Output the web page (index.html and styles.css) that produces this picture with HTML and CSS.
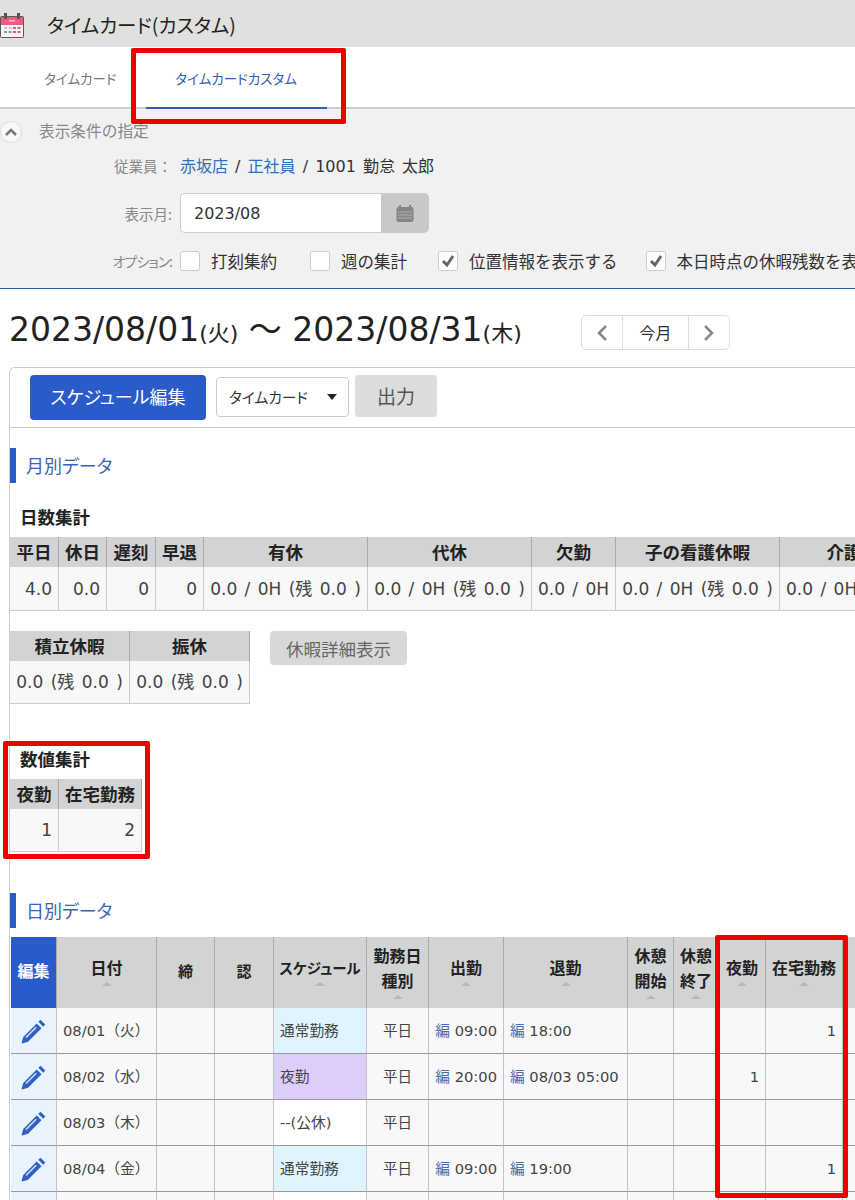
FILE: index.html
```html
<!DOCTYPE html>
<html lang="ja">
<head>
    <meta charset="UTF-8">
    <meta name="viewport" content="width=device-width, initial-scale=1.0">
    <title>タイムカード(カスタム)</title>
    <link rel="stylesheet" href="styles.css">
</head>
<body>
<div class="page">
    <header class="titlebar">
        <svg class="app-icon" width="24" height="25" viewBox="0 0 24 25">
            <rect x="0" y="3" width="24" height="22" rx="2" fill="#5a5a5a"/>
            <rect x="1" y="4" width="22" height="20" fill="#f4f4f4"/>
            <rect x="1" y="4" width="22" height="8" fill="#ef5c80"/>
            <rect x="4" y="0" width="3" height="6" fill="#555"/>
            <rect x="17" y="0" width="3" height="6" fill="#555"/>
            <path d="M9 7h6v1.500H9zM4 14h3v2H4zM8.500 14h3v2h-3z" fill="#f7b9c9"/>
            <path d="M4 18h3v2H4zM8.500 18h3v2h-3z" fill="#999"/>
            <path d="M13 14h3v2h-3zM13 18h3v2h-3zM17.500 14h3v2h-3zM17.500 18h3v2h-3z" fill="#e8577c"/>
        </svg>
        <h1>タイムカード(カスタム)</h1>
    </header>

    <nav class="tabs">
        <a class="tab">タイムカード</a>
        <a class="tab tab-active">タイムカードカスタム</a>
    </nav>

    <section class="cond">
        <div class="cond-head">
            <span class="toggle">
                <svg width="14" height="10" viewBox="0 0 14 10"><path d="M2 8l5-5 5 5" fill="none" stroke="#777" stroke-width="2.500"/></svg>
            </span>
            <span class="cond-title">表示条件の指定</span>
        </div>
        <div class="cond-row row-emp">
            <span class="cond-label">従業員：</span>
            <span class="emp"><a>赤坂店</a> / <a>正社員</a> / 1001 勤怠 太郎</span>
        </div>
        <div class="cond-row row-month">
            <span class="cond-label">表示月:</span>
            <div class="month-box">
                <span class="month-input">2023/08</span>
                <span class="month-btn">
                    <svg width="18" height="17" viewBox="0 0 18 17">
                        <rect x="0.500" y="2" width="17" height="15" rx="2" fill="#858585"/>
                        <rect x="3" y="0" width="2" height="4" fill="#858585"/>
                        <rect x="13" y="0" width="2" height="4" fill="#858585"/>
                        <path d="M2 7h14M2 10h14M2 13h14" stroke="#b0b0b0" stroke-width="1"/>
                    </svg>
                </span>
            </div>
        </div>
        <div class="cond-row row-opt">
            <span class="cond-label opt-label">オプション:</span>
            <div class="opts">
                <label class="opt"><span class="check"></span>打刻集約</label>
                <label class="opt"><span class="check"></span>週の集計</label>
                <label class="opt"><span class="check"><svg width="16" height="14" viewBox="0 0 16 14"><path d="M3 7l4 4 6-9" fill="none" stroke="#666" stroke-width="3"/></svg></span>位置情報を表示する</label>
                <label class="opt"><span class="check"><svg width="16" height="14" viewBox="0 0 16 14"><path d="M3 7l4 4 6-9" fill="none" stroke="#666" stroke-width="3"/></svg></span>本日時点の休暇残数を表示する</label>
            </div>
        </div>
    </section>

    <div class="period-row">
        <h2 class="period">2023/08/01<small>(火)</small> 〜 2023/08/31<small>(木)</small></h2>
        <div class="pager">
            <span class="pager-arrow"><svg width="12" height="18" viewBox="0 0 12 18"><path d="M10 2L3 9l7 7" fill="none" stroke="#888" stroke-width="2.500"/></svg></span>
            <span class="pager-now">今月</span>
            <span class="pager-arrow"><svg width="12" height="18" viewBox="0 0 12 18"><path d="M2 2l7 7-7 7" fill="none" stroke="#888" stroke-width="2.500"/></svg></span>
        </div>
    </div>

    <div class="card">
        <div class="toolbar">
            <button class="btn-primary">スケジュール編集</button>
            <div class="select">タイムカード<i class="caret"></i></div>
            <button class="btn-gray">出力</button>
        </div>

        <h3 class="section-title first">月別データ</h3>
        <h4 class="sub-title days">日数集計</h4>
        <table class="grid t-days">
            <colgroup>
                <col class="w49"><col class="w48"><col class="w49"><col class="w48"><col class="w164"><col class="w164"><col class="w84"><col class="w164"><col class="w164">
            </colgroup>
            <tr><th>平日</th><th>休日</th><th>遅刻</th><th>早退</th><th>有休</th><th>代休</th><th>欠勤</th><th>子の看護休暇</th><th>介護休暇</th></tr>
            <tr><td class="num">4.0</td><td class="num">0.0</td><td class="num">0</td><td class="num">0</td><td class="ctr">0.0 / 0H (残 0.0 )</td><td class="ctr">0.0 / 0H (残 0.0 )</td><td class="ctr">0.0 / 0H</td><td class="ctr">0.0 / 0H (残 0.0 )</td><td>0.0 / 0H (残 0.0 )</td></tr>
        </table>

        <div class="leave-row">
            <table class="grid t-leave">
                <colgroup><col class="w120"><col class="w120"></colgroup>
                <tr><th>積立休暇</th><th>振休</th></tr>
                <tr><td class="ctr">0.0 (残 0.0 )</td><td class="ctr">0.0 (残 0.0 )</td></tr>
            </table>
            <button class="btn-leave">休暇詳細表示</button>
        </div>

        <h4 class="sub-title nums">数値集計</h4>
        <table class="grid t-nums">
            <colgroup><col class="w49"><col class="w83"></colgroup>
            <tr><th>夜勤</th><th>在宅勤務</th></tr>
            <tr><td class="num">1</td><td class="num">2</td></tr>
        </table>

        <h3 class="section-title second">日別データ</h3>
        <table class="daily">
            <colgroup>
                <col class="w46"><col class="w100"><col class="w58"><col class="w59"><col class="w93"><col class="w62"><col class="w75"><col class="w124"><col class="w46"><col class="w45"><col class="w47"><col class="w77"><col class="w100">
            </colgroup>
            <tr>
                <th class="th-edit">編集</th>
                <th>日付<i class="sort"></i></th>
                <th class="th-plain">締</th>
                <th class="th-plain">認</th>
                <th class="th-sched">スケジュール<i class="sort"></i></th>
                <th>勤務日<br>種別<i class="sort"></i></th>
                <th>出勤<i class="sort"></i></th>
                <th>退勤<i class="sort"></i></th>
                <th>休憩<br>開始<i class="sort"></i></th>
                <th>休憩<br>終了<i class="sort"></i></th>
                <th>夜勤<i class="sort"></i></th>
                <th>在宅勤務<i class="sort"></i></th>
                <th></th>
            </tr>
            <tr>
                <td class="edit"><svg class="pencil" viewBox="0 0 26 26"><path d="M19 2.500l4.500 4.500-2 2L17 4.500zM15.500 6L20 10.500 7.500 23l-5.500 1.500a.5.5 0 0 1-.500-.500L3 18.500z" fill="#2f62c4"/><path d="M15 9.500l-9.500 9.500" stroke="#cfe0f7" stroke-width="1.500"/></svg></td>
                <td>08/01（火）</td><td></td><td></td><td class="sched-normal">通常勤務</td><td class="ctr">平日</td>
                <td class="time"><a>編</a> 09:00</td><td><a>編</a> 18:00</td><td></td><td></td><td></td><td class="num">1</td><td></td>
            </tr>
            <tr>
                <td class="edit"><svg class="pencil" viewBox="0 0 26 26"><path d="M19 2.500l4.500 4.500-2 2L17 4.500zM15.500 6L20 10.500 7.500 23l-5.500 1.500a.5.5 0 0 1-.500-.500L3 18.500z" fill="#2f62c4"/><path d="M15 9.500l-9.500 9.500" stroke="#cfe0f7" stroke-width="1.500"/></svg></td>
                <td>08/02（水）</td><td></td><td></td><td class="sched-night">夜勤</td><td class="ctr">平日</td>
                <td class="time"><a>編</a> 20:00</td><td><a>編</a> 08/03 05:00</td><td></td><td></td><td class="num">1</td><td></td><td></td>
            </tr>
            <tr>
                <td class="edit"><svg class="pencil" viewBox="0 0 26 26"><path d="M19 2.500l4.500 4.500-2 2L17 4.500zM15.500 6L20 10.500 7.500 23l-5.500 1.500a.5.5 0 0 1-.500-.500L3 18.500z" fill="#2f62c4"/><path d="M15 9.500l-9.500 9.500" stroke="#cfe0f7" stroke-width="1.500"/></svg></td>
                <td>08/03（木）</td><td></td><td></td><td class="sched-off">--(公休)</td><td class="ctr">平日</td>
                <td></td><td></td><td></td><td></td><td></td><td></td><td></td>
            </tr>
            <tr>
                <td class="edit"><svg class="pencil" viewBox="0 0 26 26"><path d="M19 2.500l4.500 4.500-2 2L17 4.500zM15.500 6L20 10.500 7.500 23l-5.500 1.500a.5.5 0 0 1-.500-.500L3 18.500z" fill="#2f62c4"/><path d="M15 9.500l-9.500 9.500" stroke="#cfe0f7" stroke-width="1.500"/></svg></td>
                <td>08/04（金）</td><td></td><td></td><td class="sched-normal">通常勤務</td><td class="ctr">平日</td>
                <td class="time"><a>編</a> 09:00</td><td><a>編</a> 19:00</td><td></td><td></td><td></td><td class="num">1</td><td></td>
            </tr>
            <tr>
                <td class="edit"><svg class="pencil" viewBox="0 0 26 26"><path d="M19 2.500l4.500 4.500-2 2L17 4.500zM15.500 6L20 10.500 7.500 23l-5.500 1.500a.5.5 0 0 1-.500-.500L3 18.500z" fill="#2f62c4"/><path d="M15 9.500l-9.500 9.500" stroke="#cfe0f7" stroke-width="1.500"/></svg></td>
                <td>08/05（土）</td><td></td><td></td><td class="sched-off">--(公休)</td><td class="ctr">平日</td>
                <td></td><td></td><td></td><td></td><td></td><td></td><td></td>
            </tr>
        </table>
    </div>

    <div class="mark mark-tab"></div>
    <div class="mark mark-nums"></div>
    <div class="mark mark-cols"></div>
</div>
</body>
</html>
```

FILE: styles.css
```css
html, body {
    margin: 0;
    padding: 0;
    height: 1200px;
    overflow: hidden;
    background: #fff;
}
body {
    font-family: "DejaVu Sans", "Noto Sans CJK JP", sans-serif;
    color: #333;
    font-size: 15px;
}
.page {
    position: relative;
    width: 855px;
    height: 1200px;
    overflow: hidden;
}
h1, h2, h3, h4 {
    margin: 0;
    font-weight: normal;
}
a {
    color: #2a72c4;
}
button {
    font-family: inherit;
    border: none;
    padding: 0;
}

/* title bar */
.titlebar {
    height: 47px;
    background: #e0e0de;
    display: flex;
    align-items: center;
}
.app-icon {
    margin-top: 4px;
}
.titlebar h1 {
    margin-left: 23px;
    padding-top: 3px;
    font-size: 19.500px;
    line-height: 44px;
    color: #222;
    font-family: "Noto Sans CJK JP", sans-serif;
    font-feature-settings: "palt";
}

/* tabs */
.tabs {
    height: 60px;
    border-bottom: 2px solid #ccc;
    display: flex;
    padding-left: 44px;
    font-family: "Noto Sans CJK JP", sans-serif;
    font-feature-settings: "palt";
    font-size: 13.500px;
}
.tab {
    color: #777;
    line-height: 62px;
    height: 62px;
    box-sizing: border-box;
}
.tab-active {
    color: #2f5cb8;
    margin-left: 29px;
    width: 181px;
    text-align: center;
    border-bottom: 2px solid #2f5cb8;
}

/* search conditions */
.cond {
    height: 179px;
    background: #f1f1f1;
    border-bottom: 1px solid #2b5ba8;
    color: #888;
}
.cond-head {
    height: 24px;
    padding-top: 11px;
    display: flex;
    align-items: center;
    font-size: 15.700px;
    gap: 17px;
    font-family: "Noto Sans CJK JP", sans-serif;
}
.cond-title {
    margin-top: -3px;
}
.toggle {
    width: 22px;
    height: 22px;
    box-sizing: border-box;
    border: 1px solid #ddd;
    border-radius: 50%;
    background: #f8f8f8;
    display: flex;
    align-items: center;
    justify-content: center;
}
.cond-row {
    display: flex;
    align-items: center;
}
.cond-label {
    flex: none;
    width: 180px;
    padding-right: 8px;
    box-sizing: border-box;
    text-align: right;
    font-family: "Noto Sans CJK JP", sans-serif;
    font-size: 14.500px;
}
.opt-label {
    font-size: 14px;
    letter-spacing: -1px;
    font-feature-settings: "palt";
}
.row-emp {
    height: 28px;
    margin-top: 7px;
}
.emp {
    color: #333;
    font-size: 16px;
    word-spacing: 2px;
}
.row-month {
    margin-top: 14px;
    height: 40px;
}
.month-box {
    display: flex;
    width: 249px;
    height: 40px;
}
.month-input {
    width: 201px;
    box-sizing: border-box;
    background: #fff;
    border: 1px solid #ccc;
    border-right: none;
    border-radius: 5px 0 0 5px;
    padding-left: 13px;
    line-height: 40px;
    font-size: 16px;
    color: #333;
}
.month-btn {
    width: 48px;
    background: #c8c8c8;
    border-radius: 0 5px 5px 0;
    display: flex;
    align-items: center;
    justify-content: center;
}
.row-opt {
    margin-top: 17px;
    height: 22px;
}
.opts {
    display: flex;
    white-space: nowrap;
    font-family: "Noto Sans CJK JP", sans-serif;
    font-size: 16.500px;
    color: #333;
}
.opt {
    display: flex;
    align-items: center;
    margin-right: 31px;
}
.opt:nth-child(1) {
    margin-right: 33px;
}
.opt:nth-child(3) {
    margin-right: 28px;
}
.check {
    width: 20px;
    height: 20px;
    box-sizing: border-box;
    background: #fff;
    border: 1px solid #ccc;
    border-radius: 3px;
    margin-right: 11px;
    display: flex;
    align-items: center;
    justify-content: center;
}

/* period heading */
.period-row {
    height: 78px;
    display: flex;
    align-items: flex-start;
    padding-left: 9px;
}
.period {
    font-size: 33px;
    line-height: 78px;
    margin-top: 2px;
    color: #222;
    width: 572px;
    white-space: nowrap;
}
.period small {
    font-size: 22px;
}
.pager {
    display: flex;
    height: 35px;
    width: 149px;
    box-sizing: border-box;
    border: 1px solid #ddd;
    border-radius: 5px;
    margin-top: 26px;
}
.pager-arrow {
    width: 41px;
    display: flex;
    align-items: center;
    justify-content: center;
}
.pager-now {
    width: 65px;
    text-align: center;
    line-height: 33px;
    border-left: 1px solid #ddd;
    border-right: 1px solid #ddd;
    font-size: 16px;
    font-family: "Noto Sans CJK JP", sans-serif;
}

/* main card */
.card {
    margin-left: 9px;
    border-left: 1px solid #ccc;
    border-top: 1px solid #ccc;
    border-top-left-radius: 6px;
    height: 900px;
}
.toolbar {
    height: 60px;
    border-bottom: 1px solid #ccc;
    display: flex;
    padding: 7px 0 0 20px;
    box-sizing: border-box;
    font-family: "Noto Sans CJK JP", sans-serif;
}
.btn-primary {
    width: 176px;
    height: 45px;
    padding-bottom: 3px;
    background: #2b5bc8;
    color: #fff;
    border-radius: 4px;
    font-size: 18px;
    font-family: "Noto Sans CJK JP", sans-serif;
    font-feature-settings: "palt";
}
.select {
    width: 133px;
    height: 40px;
    box-sizing: border-box;
    border: 1px solid #ccc;
    border-radius: 4px;
    margin: 2px 6px 0 10px;
    padding-left: 12px;
    line-height: 38px;
    font-size: 14.700px;
    color: #333;
    position: relative;
    font-feature-settings: "palt";
}
.caret {
    position: absolute;
    right: 11px;
    top: 16px;
    border-left: 5px solid transparent;
    border-right: 5px solid transparent;
    border-top: 6px solid #222;
}
.btn-gray {
    width: 82px;
    height: 42px;
    padding-bottom: 2px;
    background: #dcdcdc;
    color: #555;
    border-radius: 4px;
    font-size: 19px;
    font-family: "Noto Sans CJK JP", sans-serif;
}
.section-title {
    height: 35px;
    line-height: 35px;
    border-left: 6px solid #2b5bc8;
    padding-left: 10px;
    font-size: 18px;
    color: #3b62b5;
    font-family: "Noto Sans CJK JP", sans-serif;
    font-feature-settings: "palt";
}
.section-title.first {
    margin-top: 20px;
}
.section-title.second {
    margin-top: 41px;
}
.sub-title {
    font-weight: bold;
    font-size: 17.500px;
    line-height: 24px;
    margin-left: 10px;
    color: #222;
    font-family: "Noto Sans CJK JP", sans-serif;
}
.sub-title.days {
    margin-top: 22px;
}
.sub-title.nums {
    margin-top: 43px;
}

/* tables */
table {
    border-collapse: separate;
    border-spacing: 0;
    table-layout: fixed;
}
.grid {
    margin-top: 8px;
    font-size: 17px;
    word-spacing: 2px;
}
.t-days {
    width: 934px;
}
.t-leave {
    width: 240px;
    margin-top: 0;
}
.t-nums {
    width: 132px;
}
.w45 { width: 45px; }
.w46 { width: 46px; }
.w47 { width: 47px; }
.w48 { width: 48px; }
.w49 { width: 49px; }
.w58 { width: 58px; }
.w59 { width: 59px; }
.w62 { width: 62px; }
.w75 { width: 75px; }
.w77 { width: 77px; }
.w83 { width: 83px; }
.w84 { width: 84px; }
.w93 { width: 93px; }
.w100 { width: 100px; }
.w120 { width: 120px; }
.w124 { width: 124px; }
.w164 { width: 164px; }
.grid th {
    height: 30px;
    padding: 0;
    background: #d2d3d3;
    border-right: 1px solid #aaa;
    color: #222;
    font-size: 17.500px;
    font-family: "Noto Sans CJK JP", sans-serif;
    line-height: 30px;
    box-sizing: border-box;
}
.grid td {
    height: 44px;
    padding: 0 6px;
    background: #f8f8f8;
    border-right: 1px solid #ccc;
    border-bottom: 1px solid #ccc;
    color: #444;
    line-height: 20px;
    box-sizing: border-box;
    white-space: nowrap;
    overflow: hidden;
}
.t-nums td,
.t-leave td {
    height: 43px;
}
.grid .num,
.daily .num {
    text-align: right;
}
.grid .ctr,
.daily .ctr {
    text-align: center;
}
.grid .ctr {
    padding: 0;
}
.leave-row {
    display: flex;
    margin-top: 20px;
    align-items: flex-start;
}
.btn-leave {
    margin-left: 20px;
    width: 137px;
    height: 34px;
    background: #d8d8d8;
    color: #666;
    border-radius: 4px;
    font-size: 17.500px;
    font-family: "Noto Sans CJK JP", sans-serif;
}
.daily {
    width: 932px;
    margin: 9px 0 0 1px;
    font-size: 14.700px;
}
.daily th {
    height: 71px;
    padding: 0 0 4px;
    background: #d2d3d3;
    border-right: 1px solid #aaa;
    color: #222;
    font-size: 16px;
    line-height: 25px;
    font-family: "Noto Sans CJK JP", sans-serif;
    box-sizing: border-box;
}
.daily .th-edit {
    background: #2b5bc8;
    color: #fff;
}
.daily .th-plain {
    font-size: 15px;
}
.daily .th-sched {
    font-size: 14.500px;
    font-feature-settings: "palt";
}
.sort {
    display: block;
    width: 0;
    height: 0;
    margin: 2px auto 0;
    border-left: 5px solid transparent;
    border-right: 5px solid transparent;
    border-bottom: 4px solid #b8b8b8;
}
.daily td {
    height: 46px;
    padding: 0 6px;
    background: #f8f8f8;
    border-right: 1px solid #c4c4c4;
    border-bottom: 1px solid #999;
    color: #444;
    line-height: 20px;
    box-sizing: border-box;
    white-space: nowrap;
}
.daily .ctr {
    font-size: 14.500px;
}
.daily a {
    color: #4a6db0;
}
.daily .edit {
    background: #e9f3fd;
    padding: 0;
    text-align: center;
}
.pencil {
    width: 28px;
    height: 28px;
    display: block;
    margin: 0 auto;
}
.daily .sched-normal {
    background: #dff4fd;
}
.daily .sched-night {
    background: #dccdfb;
}
.daily .sched-off {
    background: #fff;
}
.time {
    text-align: right;
}

/* red annotation boxes drawn over the screenshot */
.mark {
    position: absolute;
    box-sizing: border-box;
    border: 5px solid #ee0000;
    border-radius: 2px;
}
.mark-tab {
    left: 131px;
    top: 48px;
    width: 215px;
    height: 76px;
}
.mark-nums {
    left: 3px;
    top: 741px;
    width: 147px;
    height: 118px;
}
.mark-cols {
    left: 715px;
    top: 935px;
    width: 133px;
    height: 263px;
}
```
